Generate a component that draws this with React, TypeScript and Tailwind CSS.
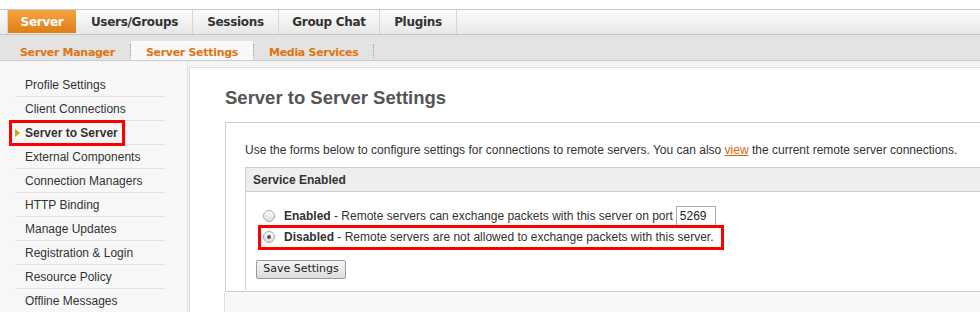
import { Fragment } from 'react';

const topTabs = [
  { label: 'Server', w: 'w-[69px]', active: true },
  { label: 'Users/Groups', w: 'w-[116px]' },
  { label: 'Sessions', w: 'w-[86px]' },
  { label: 'Group Chat', w: 'w-[101px]' },
  { label: 'Plugins', w: 'w-[77px]' },
];

const subTabs = [
  { label: 'Server Manager' },
  { label: 'Server Settings', active: true },
  { label: 'Media Services' },
];

const sideItems = [
  'Profile Settings',
  'Client Connections',
  'Server to Server',
  'External Components',
  'Connection Managers',
  'HTTP Binding',
  'Manage Updates',
  'Registration & Login',
  'Resource Policy',
  'Offline Messages',
];

const Radio = ({ checked = false }: { checked?: boolean }) => (
  <span className="w-[12px] h-[12px] rounded-full border border-[#a9a9a9] bg-gradient-to-b from-[#fdfdfd] to-[#dcdcdc] flex items-center justify-center shrink-0">
    {checked && <span className="w-[4px] h-[4px] rounded-full bg-[#555]" />}
  </span>
);

export default function App() {
  return (
    <div className="w-[980px] h-[312px] overflow-hidden bg-white font-['Liberation_Sans',Arial,sans-serif] text-[12px] text-[#333]">
      <div className="h-[9px]" />

      {/* main tabs */}
      <div className="h-[26px] flex border-t border-b border-t-[#c9c9c9] border-b-[#c4c4c4] bg-gradient-to-b from-[#fcfcfc] to-[#e7e7e7] font-['DejaVu_Sans',Verdana,sans-serif] font-bold text-[12px] tracking-[-0.3px]">
        <div className="w-[8px] border-r border-[#d6d6d6]" />
        {topTabs.map((t) => (
          <div
            key={t.label}
            className={
              t.active
                ? `${t.w} h-[23px] flex items-center justify-center text-white bg-gradient-to-b from-[#f4a540] to-[#df7e12] border-r border-[#f6f6f6]`
                : `${t.w} h-full flex items-center justify-center text-[#333] border-r border-[#d6d6d6]`
            }
          >
            {t.label}
          </div>
        ))}
      </div>

      {/* sub tabs */}
      <div className="h-[26px] flex items-end pl-[5px] bg-[#e3e3e3] border-b border-[#cbcbcb] font-['DejaVu_Sans',Verdana,sans-serif] font-bold text-[11px] tracking-[-0.3px] text-[#e07411]">
        {subTabs.map((t) => (
          <Fragment key={t.label}>
            <div className={`h-[19px] flex items-center pt-[5px] px-[15px] ${t.active ? 'bg-[#f8f8f8]' : ''}`}>{t.label}</div>
            <div className="h-[14px] mb-[2px] border-l border-dotted border-[#8fa3b0]" />
          </Fragment>
        ))}
      </div>

      <div className="flex">
        {/* sidebar */}
        <div className="w-[188px] h-[260px] bg-[#f7f7f7] border-r border-[#e2e2e2] pt-[12px] shrink-0">
          {sideItems.map((s) => {
            const active = s === 'Server to Server';
            return (
              <div key={s} className="relative ml-[15px] w-[150px] h-[24px] border-b border-[#e2e2e2] flex items-center pl-[10px]">
                {active && (
                  <>
                    <span className="absolute left-0 top-[8px] w-0 h-0 border-y-[4px] border-y-transparent border-l-[5px] border-l-[#d9a000]" />
                    <span className="absolute left-[-6px] top-[-1px] w-[116px] h-[26px] border-[3px] border-[#ff0000]" />
                  </>
                )}
                <span className={active ? 'font-bold text-[#333]' : ''}>{s}</span>
              </div>
            );
          })}
        </div>

        {/* content */}
        <div className="flex-1 bg-[#f5f5f5] pt-[6px] pl-[1px]">
          <div className="bg-white border-l border-t border-[#dedede] h-[300px] pl-[35px]">
            <h1 className="text-[18.5px] font-bold text-[#555] h-[54px] pt-[19px] leading-[22px]">Server to Server Settings</h1>
            <div className="w-[780px] border border-[#cfcfcf] bg-white pl-[19px] h-[170px]">
              <p className="pt-[20px] leading-[14px]">
                Use the forms below to configure settings for connections to remote servers. You can also{' '}
                <span className="text-[#d4660a] underline">view</span> the current remote server connections.
              </p>
              <div className="mt-[10px] border-l border-t border-r border-[#cfcfcf] h-[123px]">
                <div className="h-[24px] bg-[#eeeeee] border-b border-[#cfcfcf] flex items-center pl-[7px] font-bold">Service Enabled</div>
                <div className="relative pt-[14px]">
                  <div className="h-[20px] flex items-center pl-[17px]">
                    <Radio />
                    <span className="ml-[9px]"><b>Enabled</b> - Remote servers can exchange packets with this server on port</span>
                    <span className="ml-[3px] w-[40px] h-[20px] border border-[#aaa] flex items-center pl-[3px] text-[#222]">5269</span>
                  </div>
                  <div className="h-[22px] flex items-center pl-[17px]">
                    <Radio checked />
                    <span className="ml-[9px]"><b>Disabled</b> - Remote servers are not allowed to exchange packets with this server.</span>
                  </div>
                  <span className="absolute left-[12px] top-[33px] w-[466px] h-[25px] border-[3px] border-[#ff0000]" />
                  <button className="mt-[12px] ml-[10px] w-[90px] h-[19px] border border-[#9a9a9a] rounded-[2px] bg-gradient-to-b from-[#f6f6f6] to-[#dcdcdc] font-['DejaVu_Sans',Verdana,sans-serif] text-[11px] text-[#222] flex items-center justify-center">
                    Save Settings
                  </button>
                </div>
              </div>
            </div>
            <div className="h-[40px] bg-[#f7f7f7] ml-[-1px] border-l border-[#dedede]" />
          </div>
        </div>
      </div>
    </div>
  );
}
